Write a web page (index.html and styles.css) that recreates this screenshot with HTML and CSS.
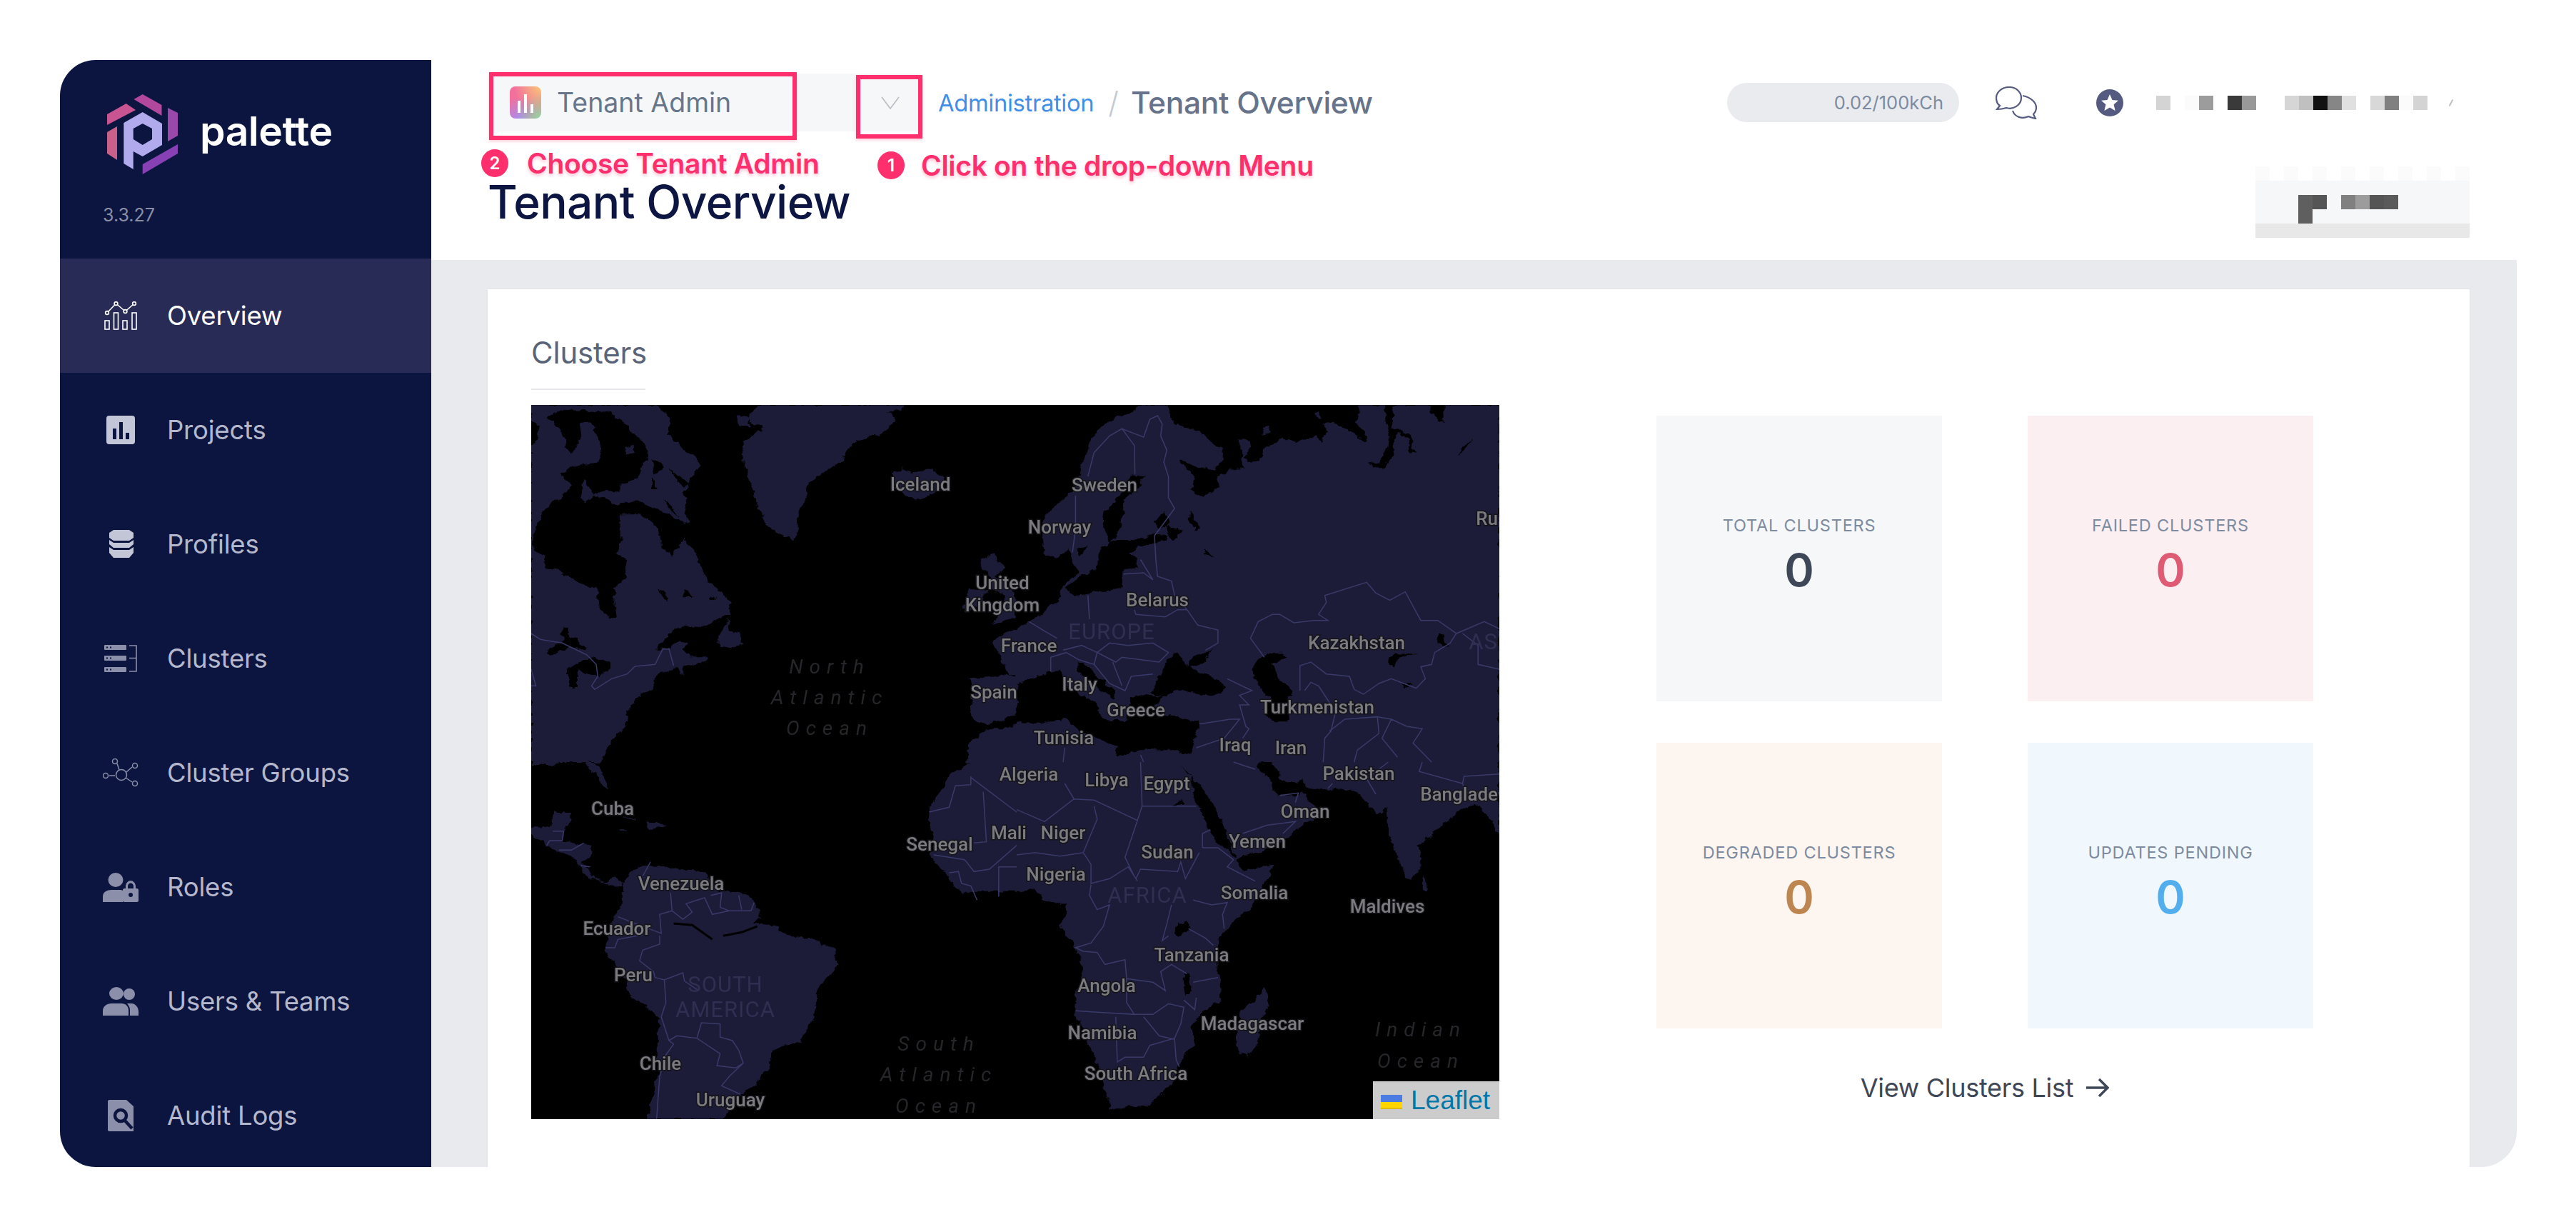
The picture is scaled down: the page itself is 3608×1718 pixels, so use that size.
FILE: index.html
```html
<!DOCTYPE html>
<html lang="en">
<head>
<meta charset="utf-8">
<title>Tenant Overview</title>
<link rel="stylesheet" href="styles.css">
</head>
<body>
<div class="window">
  <aside class="sidebar">
    <div class="brand">
      <div class="brand-row">
        <svg class="logo" viewBox="0 0 99 113" aria-hidden="true">
          <polygon fill="#b2489e" points="49.7,0 76.5,15 76.5,30 37.4,7"/>
          <polygon fill="#c85592" points="0,28 26.7,13 40,22 0,43"/>
          <polygon fill="#c9608a" points="0,53 14,45 14,92 0,83"/>
          <polygon fill="#9b48ab" points="85,19 99,26 99,58 85,66"/>
          <polygon fill="#8741b5" points="49.7,98 99,70 99,83 49.7,112"/>
          <path fill="#b1aaec" fill-rule="evenodd" d="M49.7 25 77 41V71L49.7 87 36.7 80V105L23.3 97V40ZM49.7 41 36.7 48V63L49.7 71 63 63V48Z"/>
        </svg>
        <span class="brand-name">palette</span>
      </div>
      <div class="version">3.3.27</div>
    </div>
    <nav class="nav">
      <a class="nav-item active">
        <span class="nav-icon">
          <svg width="46" height="40" viewBox="0 0 46 40" fill="none" stroke="#fff" stroke-width="1.6">
            <polyline points="4,16 16.5,3 29.5,14 42,3"/>
            <circle cx="4" cy="16" r="2.4" fill="#272b55"/><circle cx="16.5" cy="3" r="2.4" fill="#272b55"/>
            <circle cx="29.5" cy="14" r="2.4" fill="#272b55"/><circle cx="42" cy="3" r="2.4" fill="#272b55"/>
            <rect x="1" y="27" width="6" height="12"/><rect x="13.5" y="16" width="6" height="23"/>
            <rect x="26" y="27" width="6" height="12"/><rect x="39" y="16" width="6" height="23"/>
          </svg>
        </span>
        <span>Overview</span>
      </a>
      <a class="nav-item">
        <span class="nav-icon">
          <svg width="40" height="40" viewBox="0 0 40 40">
            <rect width="40" height="40" rx="4" fill="#c3c6d6"/>
            <rect x="9" y="18" width="5" height="15" fill="#0c1540"/><rect x="18" y="9" width="5" height="24" fill="#0c1540"/><rect x="27" y="24" width="5" height="9" fill="#0c1540"/>
          </svg>
        </span>
        <span>Projects</span>
      </a>
      <a class="nav-item">
        <span class="nav-icon">
          <svg width="34" height="40" viewBox="0 0 34 40" fill="#c3c6d6">
            <path d="M6 0H28L34 4V11L28 15H6L0 11V4Z"/>
            <path d="M0 14 6 18H28L34 14V20L28 25H6L0 20Z"/>
            <path d="M0 24 6 28H28L34 24V32L28 39H6L0 32Z"/>
          </svg>
        </span>
        <span>Profiles</span>
      </a>
      <a class="nav-item">
        <span class="nav-icon">
          <svg width="46" height="38" viewBox="0 0 46 38">
            <g fill="#8b8fa9">
              <rect y="0" width="31" height="7" rx="1"/><rect y="15" width="31" height="7" rx="1"/><rect y="31" width="31" height="7" rx="1"/>
            </g>
            <g fill="#0c1540">
              <rect x="3" y="2.5" width="2" height="2"/><rect x="8" y="2.5" width="2" height="2"/>
              <rect x="3" y="17.5" width="2" height="2"/><rect x="8" y="17.5" width="2" height="2"/>
              <rect x="3" y="33.5" width="2" height="2"/><rect x="8" y="33.5" width="2" height="2"/>
            </g>
            <path d="M35 1H45V37H35M35 18.500H45" fill="none" stroke="#8b8fa9" stroke-width="1.600"/>
          </svg>
        </span>
        <span>Clusters</span>
      </a>
      <a class="nav-item">
        <span class="nav-icon">
          <svg width="50" height="40" viewBox="0 0 50 40" fill="none" stroke="#8b8fa9" stroke-width="1.500">
            <circle cx="26" cy="23" r="7.500"/><circle cx="17" cy="4" r="3.500"/><circle cx="45" cy="10" r="3.500"/><circle cx="45" cy="35" r="3.500"/><circle cx="4" cy="24" r="3.500"/>
            <path d="M20 7 23 16M41 12 33 19M41 33 32 27M9 24H17"/>
          </svg>
        </span>
        <span>Cluster Groups</span>
      </a>
      <a class="nav-item">
        <span class="nav-icon">
          <svg width="50" height="41" viewBox="0 0 50 41" fill="#8b8fa9">
            <ellipse cx="18" cy="10" rx="10.500" ry="10"/>
            <path d="M0 41V33C0 27 6 24 12 24H24C25 24 27 24 28 25V41Z"/>
            <path d="M32 22V19C32 14 36 11 39 11S46 14 46 19V22H43V19C43 16 41 14.500 39 14.500S35 16 35 19V22Z"/>
            <path d="M30 22H48C49 22 50 23 50 24V39C50 40 49 41 48 41H30C29 41 28 40 28 39V24C28 23 29 22 30 22Z"/>
            <circle cx="39" cy="31" r="3" fill="#0c1540"/>
          </svg>
        </span>
        <span>Roles</span>
      </a>
      <a class="nav-item">
        <span class="nav-icon">
          <svg width="50" height="40" viewBox="0 0 50 40" fill="#8b8fa9">
            <ellipse cx="19" cy="9" rx="10" ry="9"/><ellipse cx="37" cy="10" rx="8" ry="8"/>
            <path d="M0 40V33C0 27 6 23 12 23H26C32 23 36 27 36 33V40Z"/>
            <path d="M38 40V32C38 28 36 26 34 23H40C46 23 50 29 50 34V40Z"/>
          </svg>
        </span>
        <span>Users &amp; Teams</span>
      </a>
      <a class="nav-item">
        <span class="nav-icon">
          <svg width="36" height="44" viewBox="0 0 36 44">
            <path fill="#8b8fa9" d="M2 0H26L36 9V44H2C1 44 0 43 0 42V2C0 1 1 0 2 0Z"/>
            <circle cx="18" cy="22" r="8" fill="none" stroke="#0c1540" stroke-width="4.500"/>
            <path d="M23 28 34 40" stroke="#0c1540" stroke-width="4.500"/>
          </svg>
        </span>
        <span>Audit Logs</span>
      </a>
    </nav>
  </aside>

  <main class="main">
    <header class="header">
      <div class="topbar">
        <div class="select">
          <span class="select-icon">
            <svg width="44" height="45" viewBox="0 0 44 45">
              <rect x="11" y="20" width="4" height="17" fill="#fff"/><rect x="20" y="11" width="4" height="26" fill="#fff"/><rect x="29" y="25" width="4" height="12" fill="#fff"/>
            </svg>
          </span>
          <span class="select-label">Tenant Admin</span>
          <span class="select-chevron">
            <svg width="26" height="18" viewBox="0 0 26 18" fill="none" stroke="#b9bcc2" stroke-width="1.600"><polyline points="1,1 13,17 25,1"/></svg>
          </span>
        </div>
        <div class="crumbs">
          <a class="crumb-link">Administration</a>
          <span class="crumb-sep">/</span>
          <span class="crumb-current">Tenant Overview</span>
        </div>
        <div class="top-right">
          <div class="credits">0.02/100kCh</div>
          <svg class="chat" width="58" height="46" viewBox="0 0 58 46" fill="none" stroke="#555b80" stroke-width="2.200">
            <path d="M19 1C9 1 1 8 1 16C1 21 3 25 6 27L2 32C8 32 12 31 15 30C25 33 36 26 36 16C36 8 29 1 19 1Z"/>
            <path d="M38 13C49 15 57 22 57 30C57 34 55 37 53 39L56 45C51 44 48 43 46 42C37 46 27 43 24 34"/>
          </svg>
          <svg class="star" width="38" height="38" viewBox="0 0 38 38">
            <circle cx="19" cy="19" r="19" fill="#555b80"/>
            <polygon fill="#fff" points="19,7 22.500,15 31,15.700 24.600,21.300 26.600,30 19,25.400 11.400,30 13.400,21.300 7,15.700 15.500,15"/>
          </svg>
          <div class="pix-user"></div>
          <span class="pix-tick"></span>
        </div>
      </div>
      <div class="titlebar">
        <h1 class="page-title">Tenant Overview</h1>
        <div class="pix-action">
          <div class="pix-r1"></div><div class="pix-r2"></div><div class="pix-r3"></div><div class="pix-r4"></div><div class="pix-r5"></div>
        </div>
      </div>

      <span class="mark mark-select"></span>
      <span class="mark mark-chevron"></span>
      <div class="note note-two"><span class="note-dot">2</span><span>Choose Tenant Admin</span></div>
      <div class="note note-one"><span class="note-dot">1</span><span>Click on the drop-down Menu</span></div>
    </header>

    <section class="content">
      <div class="card">
        <div class="map-col">
          <h2 class="card-title">Clusters</h2>
          <div class="map">
            <svg class="map-svg" viewBox="0 0 1356 1000" preserveAspectRatio="none">
              <defs>
                <filter id="coast" filterUnits="userSpaceOnUse" x="0" y="0" width="3127" height="3000">
                  <feTurbulence type="fractalNoise" baseFrequency="0.035 0.03" numOctaves="3" seed="4" result="n"/>
                  <feDisplacementMap in="SourceGraphic" in2="n" scale="26" xChannelSelector="R" yChannelSelector="G"/>
                </filter>
              </defs>
              <g transform="scale(0.43367 0.33333)">
                <g class="coast">
                <g class="land">
                  <!-- north-west quadrant -->
                  <polygon points="0,0 400,0 440,40 450,90 440,120 480,170 520,215 550,250 520,290 510,330 490,370 500,420 505,500 500,560 530,630 550,690 570,740 610,780 645,830 640,880 600,900 560,930 470,935 430,980 405,1030 440,1025 480,990 510,1000 490,1020 510,1060 570,1060 570,1075 490,1100 485,1135 470,1100 400,1140 395,1190 345,1220 310,1290 305,1350 260,1410 225,1500 0,1500"/>
                  <polygon points="725,0 1100,0 1170,40 1180,70 1130,120 1040,160 1020,190 1000,240 950,280 900,320 885,400 865,450 860,530 845,570 800,540 760,500 740,440 720,380 700,300 685,250 680,200 690,150 745,100 700,60"/>
                  <polygon points="1100,0 1205,0 1195,25 1120,30"/>
                  <polygon points="665,40 700,50 705,90 675,85"/>
                  <polygon points="1170,290 1195,265 1230,285 1295,265 1325,300 1320,350 1280,380 1240,405 1200,370 1165,340"/>
                  <polygon points="635,895 610,960 600,1010 650,1015 685,1005 670,960 640,950"/>
                  <polygon points="1450,650 1490,628 1528,680 1505,715 1535,770 1568,800 1568,890 1490,920 1530,860 1530,800 1470,760 1490,720 1455,690"/>
                  <polygon points="1420,770 1470,780 1450,830 1400,880 1400,840"/>
                  <polygon points="1490,990 1530,960 1568,945 1568,1135 1545,1135 1510,1050"/>
                  <polygon points="1415,1150 1510,1140 1530,1130 1568,1145 1568,1290 1520,1320 1470,1345 1420,1310 1415,1270 1430,1210"/>
                  <polygon points="1470,1360 1520,1360 1568,1340 1568,1500 1405,1500 1420,1420"/>
                  <!-- south-west quadrant -->
                  <g transform="translate(0 1500)">
                    <polygon points="0,0 90,0 60,15 0,15"/>
                    <polygon points="175,0 210,5 245,80 240,115 215,70"/>
                    <polygon points="0,280 60,270 75,210 135,210 110,280 105,335 195,350 190,400 160,420 190,450 205,490 240,505 270,480 295,510 290,520 240,510 205,495 170,470 155,430 130,390 60,360 40,330 0,320"/>
                    <polygon points="370,248 410,250 435,270 385,283"/>
                    <polygon points="295,232 340,236 340,240 295,238"/>
                    <polygon points="285,280 305,280 305,285 285,285"/>
                    <polygon points="295,520 325,450 365,435 395,440 440,440 510,455 555,460 570,480 610,545 680,550 720,580 740,650 720,680 790,690 830,730 900,740 985,795 988,860 925,950 920,1040 905,1100 870,1170 780,1210 765,1290 720,1360 660,1420 620,1500 375,1500 410,1300 410,1070 320,980 300,900 235,790 240,760 270,650 295,600"/>
                    <polygon points="1568,0 1420,0 1350,60 1290,190 1280,220 1300,310 1290,400 1340,470 1380,540 1440,580 1510,565 1568,565"/>
                  </g>
                  <!-- eastern half, land first then seas cut in black -->
                  <rect x="1568" y="0" width="1559" height="3000"/>
                </g>
                <g class="water">
                  <path d="M5,600 15,510 45,440 75,405 110,375 135,320 160,280 175,300 160,340 170,410 200,380 240,400 280,420 340,400 380,420 470,480 510,500 495,570 455,635 420,600 415,520 350,460 285,460 290,560 280,620 305,660 305,720 265,780 275,880 250,900 215,840 210,770 160,750 80,690 45,685 40,630Z"/>
                  <path d="M50,50 100,20 260,30 310,90 370,170 380,220 350,270 345,310 285,335 285,365 240,360 200,375 165,300 130,330 90,290 150,255 215,245 225,200 215,130 190,70 155,75 160,130 130,210 110,160 90,100Z"/>
                  <path d="M0,80 25,90 15,150 0,170Z"/>
                  <path d="M390,225 430,260 400,290Z"/><path d="M445,265 510,330 490,345Z"/><path d="M385,310 410,350 385,355Z"/><path d="M430,395 480,470 440,430Z"/>
                  <path d="M300,175 330,165 330,205 305,212Z" class="land-fill"/>
                  <path d="M100,935 120,935 120,975 150,985 175,1030 130,1020 60,1050 45,1040 100,990Z"/>
                  <path d="M120,1100 165,1080 190,1060 250,1080 255,1105 215,1140 185,1130 150,1110 150,1190 130,1200 115,1130Z"/>
                  <path d="M410,770 440,790 445,830 410,790Z"/><path d="M500,770 525,810 485,810Z"/><path d="M580,800 600,810 575,825Z"/>
                  <g transform="translate(1568 0)">
                    <path d="M-5,-5 410,-5 362,40 314,60 290,80 240,140 215,240 190,350 130,420 80,480 85,560 90,630 130,640 165,600 180,640 200,700 150,760 140,810 100,860 40,910 -5,950Z"/>
                    <path d="M165,610 195,690 205,715 260,690 265,620 300,570 275,500 280,450 330,385 360,320 365,295 410,300 400,340 345,400 340,500 310,570 370,570 440,545 490,550 480,570 400,590 370,620 395,685 345,690 340,770 250,790 190,800 160,770 205,715Z"/>
                    <path d="M491,-5 1108,-5 1095,70 1132,130 1120,150 1039,80 991,75 1003,110 979,155 967,125 894,160 862,135 797,190 781,235 749,240 733,215 757,180 753,150 721,145 725,210 733,270 692,265 648,300 652,350 604,390 564,360 572,300 527,230 588,260 636,275 668,240 668,200 596,115 503,75 495,25Z"/>
                    <path d="M1192,-5 1220,-5 1212,100 1240,100 1273,130 1281,185 1293,200 1269,195 1265,140 1232,115 1216,160 1220,200 1188,265 1152,265 1132,240 1168,245 1200,180 1204,130 1188,60Z"/>
                    <path d="M1341,-5 1378,-5 1378,75 1362,60 1341,30Z"/><path d="M1434,180 1470,140 1445,190 1434,210Z"/>
                    <path d="M440,490 480,450 490,500 460,520Z"/><path d="M560,440 590,510 575,530 555,480Z"/><path d="M485,500 530,530 510,570 490,540Z"/><path d="M605,605 635,640 610,630Z"/><path d="M200,600 225,590 215,630 200,635Z"/>
                    <path d="M445,1180 480,1100 490,1060 520,1045 545,1080 550,1100 570,1060 630,1030 600,1090 560,1100 640,1150 680,1180 660,1215 600,1215 520,1195 470,1225 440,1210Z"/>
                    <path d="M760,1110 775,1075 815,1040 860,1040 870,1060 830,1090 845,1150 890,1200 880,1230 880,1330 830,1330 800,1300 820,1240 780,1170Z"/>
                    <path d="M0,1170 40,1150 140,1115 165,1180 220,1230 260,1245 265,1295 290,1320 350,1330 370,1230 420,1215 470,1225 445,1265 470,1300 590,1330 560,1470 500,1450 400,1450 320,1480 320,1430 200,1370 160,1320 60,1340 0,1330Z"/>
                    <path d="M195,1080 215,1080 250,1130 320,1200 315,1240 260,1190 205,1130Z"/>
                    <path d="M1200,1060 1225,1045 1295,1045 1240,1060 1210,1100Z"/><path d="M1360,960 1380,965 1390,1015 1355,1000Z"/><path d="M1240,1170 1280,1170 1260,1185Z"/>
                    <polygon class="land-fill" points="958,30 975,30 987,62 970,60"/>
                    <polygon class="land-fill" points="793,95 815,90 821,115 795,125"/>
                  </g>
                  <g transform="translate(1568 1500)">
                    <path d="M-170,545 0,545 60,535 85,575 155,600 160,630 140,690 190,770 215,870 190,1000 190,1060 240,1200 280,1340 300,1460 350,1450 430,1440 500,1350 530,1250 575,1180 560,1110 600,1050 660,1000 655,900 640,830 650,740 770,590 830,430 730,455 705,410 830,355 900,290 945,250 975,220 945,170 920,120 910,140 840,140 825,100 780,20 790,0 830,0 850,70 910,90 920,70 940,110 1010,120 1080,110 1120,150 1165,220 1190,190 1200,300 1260,490 1275,490 1305,450 1300,350 1390,250 1430,200 1500,180 1565,320 1565,1505 -100,1505Z"/>
                    <path d="M530,10 550,50 590,90 640,190 680,300 705,395 700,405 685,370 640,330 605,230 575,160 560,60Z"/>
                    <path d="M505,190 530,150 540,180Z"/>
                    <path d="M515,675 550,670 555,710 525,735 510,720Z"/><path d="M545,890 560,900 565,960 545,980 540,950Z"/>
                  </g>
                </g>
                <g class="land">
                  <g transform="translate(1568 1500)">
                    <polygon points="1305,475 1330,510 1330,540 1310,540"/>
                    <polygon points="800,940 815,1010 790,1090 775,1190 745,1235 715,1220 705,1160 725,1040 770,1000"/>
                  </g>
                </g>
                </g>
                <g class="lines">
                  <path d="M0,960 30,985 100,1000 180,1050 210,1090 215,1140 195,1180 205,1195 260,1150 310,1130 335,1098 400,1090 425,1025 445,1025 460,1095"/>
                  <path d="M0,1110 15,1180 0,1180"/>
                  <g transform="translate(0 1500)">
                    <path d="M1420,65 1568,210M1460,125 1470,335 1430,340M1420,60 1420,95 1370,100 1350,190 1285,210M1300,390 1400,410 1430,460 1480,450 1568,350M1350,465 1380,460 1390,510 1420,520 1440,580M1510,565 1510,440 1568,440"/>
                    <path d="M385,420 360,480M450,550 455,625 490,660 520,630 500,595 560,570 585,640 640,625 710,625 720,590M580,560 615,550 610,610 640,625M670,560 680,620M455,625 415,640 420,720 280,650M415,730 415,765 360,790 350,835 395,880 400,905 430,915 490,885 495,920 540,960M430,915 435,1010 420,1070 445,1170 460,1185 435,1230 415,1320 405,1500M445,1170 470,1150 535,1160 550,1095 610,1100 610,1155 650,1170 670,1210 685,1265 640,1320 615,1360 675,1395M535,1160 610,1225 600,1275 660,1285 685,1265M240,780 270,780 280,745 360,725"/>
                    <path d="M70,290 105,290 100,330 60,330 50,350M90,370 130,370 170,340M160,435 190,440"/>
                  </g>
                  <g transform="translate(1568 0)">
                    <path d="M230,300 250,200 300,130 340,100 380,170 382,290M190,380 190,520 180,620"/>
                    <path d="M340,100 410,135 430,60 455,45 470,80 465,130 485,190 475,240 490,300 490,390 510,435 445,550 450,660 455,720 500,740 510,800 550,860 585,925 650,945 650,1000 610,1030"/>
                    <path d="M345,710 410,705 440,735 400,650M380,860 385,880 480,890 520,860 550,860"/>
                    <path d="M800,1060 755,980 780,910 825,880 850,880 895,915 960,905 1005,905 975,880 1000,830 995,800 1130,745 1160,790 1205,820 1255,785 1305,905 1360,905 1420,960 1400,1000 1350,1040 1340,1090 1305,1100 1320,1150 1290,1190 1210,1150 1170,1170 1120,1215 1090,1195 1075,1140 1000,1130 950,1080 915,1095 915,1200"/>
                    <path d="M930,1200 950,1165 975,1180 1030,1290 1015,1370 995,1400 990,1500M1010,1370 1060,1320 1165,1310 1170,1380 1100,1450 1090,1500"/>
                    <path d="M1420,960 1510,910 1559,940M1440,960 1490,1010 1490,1090 1559,1110"/>
                    <path d="M230,800 235,900M40,910 90,950 130,980M150,1030 210,1010 260,1040 300,1000 360,1010 440,1000 490,1040 460,1080 340,1060 320,1080 260,1040 250,1090 300,1170 350,1200 370,1140 440,1130M310,1080 340,1180M110,1060 160,1040 200,1070 250,1090M110,1060 110,1120"/>
                    <path d="M680,1150 760,1200 720,1220 750,1260 720,1260 740,1350 750,1360 730,1400M590,1340 690,1320 720,1320 670,1400 580,1440"/>
                    <path d="M1165,1310 1210,1320 1260,1350 1310,1360 1280,1420 1340,1500M1210,1320 1180,1400 1230,1480M155,1440 150,1500M400,1470 410,1500"/>
                  </g>
                  <g transform="translate(1568 1500)">
                    <path d="M155,90 185,155 90,250 0,200M185,155 250,160 390,245 405,185 400,0M405,185 580,185M250,185 260,240 215,380 240,430 240,510 300,490 360,440 385,490 400,450 520,460 530,420 545,490 590,380M390,245 350,400 380,480 390,500M600,360 600,300 625,285M600,360 650,360 700,410 680,440 770,500M0,390 60,380 140,395 215,380"/>
                    <path d="M240,515 235,560 260,620 300,600 280,690 240,760 190,780 215,795 260,800 285,850 350,830 355,910 440,925 480,960 465,880 500,850 550,890M570,580 630,600 680,590 665,640 670,700M555,700 610,740 635,770M500,600 485,680 470,750 490,730M355,910 355,1010 380,1060 190,1045"/>
                    <path d="M380,1060 440,1060 490,1015 540,1030 530,1100 510,1160 430,1190 410,1240 350,1240 325,1260 320,1070M410,1070 460,1150 510,1165 515,1250 525,1280M570,925 650,905M540,1000 575,1040 580,990"/>
                    <path d="M700,0 770,30M850,140 910,130 900,170M730,300 810,265 900,250 860,300M1020,90 1005,110M1160,135 1130,70 1200,0M1310,0 1300,40 1440,90 1445,60 1559,50M1440,90 1450,130 1559,130"/>
                  </g>
                </g>
                <g class="river">
                  <path d="M460,2178 520,2185 585,2245M620,2230 680,2215 730,2190"/>
                </g>
              </g>
              <g class="lbl">
                <text x="545" y="120">Iceland</text><text x="803" y="121">Sweden</text><text x="740" y="180">Norway</text>
                <text x="660" y="258">United</text><text x="660" y="289">Kingdom</text><text x="877" y="282">Belarus</text>
                <text x="697" y="346">France</text><text x="1156" y="342">Kazakhstan</text><text x="768" y="400">Italy</text>
                <text x="648" y="411">Spain</text><text x="1101" y="432">Turkmenistan</text><text x="847" y="436">Greece</text>
                <text x="746" y="475">Tunisia</text><text x="986" y="485">Iraq</text><text x="1064" y="489">Iran</text>
                <text x="697" y="526">Algeria</text><text x="806" y="534">Libya</text><text x="890" y="539">Egypt</text>
                <text x="1159" y="525">Pakistan</text><text class="at-edge" x="1354" y="554">Banglade</text><text x="114" y="574">Cuba</text>
                <text x="1084" y="578">Oman</text><text x="572" y="624">Senegal</text><text x="669" y="608">Mali</text>
                <text x="745" y="608">Niger</text><text x="1017" y="620">Yemen</text><text x="891" y="635">Sudan</text>
                <text x="735" y="666">Nigeria</text><text x="210" y="679">Venezuela</text><text x="1013" y="692">Somalia</text>
                <text x="1199" y="711">Maldives</text><text x="120" y="742">Ecuador</text><text x="925" y="779">Tanzania</text>
                <text x="806" y="822">Angola</text><text x="143" y="807">Peru</text><text x="1010" y="875">Madagascar</text>
                <text x="800" y="888">Namibia</text><text x="181" y="931">Chile</text><text x="847" y="945">South Africa</text>
                <text x="279" y="982">Uruguay</text><text class="at-edge" x="1354" y="168">Ru</text>
              </g>
              <g class="lbl-region">
                <text x="813" y="328">EUROPE</text><text x="863" y="697">AFRICA</text><text x="272" y="822">SOUTH</text>
                <text x="272" y="857">AMERICA</text><text class="at-edge" x="1354" y="342">AS</text>
              </g>
              <g class="lbl-ocean">
                <text x="418" y="376">North</text><text x="418" y="419">Atlantic</text><text x="418" y="462">Ocean</text>
                <text x="571" y="904">South</text><text x="571" y="947">Atlantic</text><text x="571" y="991">Ocean</text>
                <text x="1246" y="884">Indian</text><text x="1246" y="928">Ocean</text>
              </g>
            </svg>
            <div class="attribution">
              <svg width="30" height="20" viewBox="0 0 30 20"><rect width="30" height="10" fill="#4c7be1"/><rect y="10" width="30" height="8" fill="#ffd500"/><rect y="18" width="30" height="2" fill="#e0bc00"/></svg>
              <span>Leaflet</span>
            </div>
          </div>
        </div>
        <div class="stats-col">
          <div class="stats">
            <div class="tile tile-total"><div class="tile-label">TOTAL CLUSTERS</div><div class="tile-num">0</div></div>
            <div class="tile tile-failed"><div class="tile-label">FAILED CLUSTERS</div><div class="tile-num">0</div></div>
            <div class="tile tile-degraded"><div class="tile-label">DEGRADED CLUSTERS</div><div class="tile-num">0</div></div>
            <div class="tile tile-updates"><div class="tile-label">UPDATES PENDING</div><div class="tile-num">0</div></div>
          </div>
          <a class="view-link">
            <span>View Clusters List</span>
            <svg width="32" height="28" viewBox="0 0 32 28" fill="none" stroke="#3e4757" stroke-width="3.400"><path d="M0 14H30M18 2 30 14 18 26"/></svg>
          </a>
        </div>
      </div>
    </section>
  </main>
</div>
</body>
</html>
```

FILE: styles.css
```css
* { box-sizing: border-box; }
html, body { margin: 0; background: #fff; }
body { font-family: Inter, "Open Sans", sans-serif; }

.window {
  display: flex;
  width: 3441px;
  height: 1550px;
  margin: 84px 0 0 84px;
  border-radius: 50px;
  overflow: hidden;
}

/* sidebar */
.sidebar { flex: 0 0 520px; background: #0c1540; display: flex; flex-direction: column; }
.brand { flex: none; height: 278px; padding: 48px 0 0 60px; }
.brand-row { display: flex; align-items: center; gap: 31px; margin-left: 6px; }
.logo { width: 99px; height: 113px; }
.brand-name { color: #fff; font-size: 57px; font-weight: 600; letter-spacing: -0.5px; line-height: 1; margin-top: -10px; }
.version { color: #8a8ea6; font-size: 25px; margin-top: 41px; line-height: 30px; }
.nav { flex: none; display: flex; flex-direction: column; }
.nav-item {
  display: flex; align-items: center;
  height: 160px; padding-left: 60px;
  color: #b5b8cc; font-size: 36.500px; letter-spacing: -0.2px;
}
.nav-item.active { background: #272b55; color: #fff; }
.nav-icon { flex: 0 0 90px; display: flex; }
.nav-icon svg { display: block; margin-left: 2px; }
.nav-item:nth-child(2) .nav-icon svg { margin-left: 5px; }
.nav-item:nth-child(3) .nav-icon svg { margin-left: 9px; }
.nav-item:nth-child(5) .nav-icon svg,
.nav-item:nth-child(6) .nav-icon svg,
.nav-item:nth-child(7) .nav-icon svg { margin-left: 0; }
.nav-item:nth-child(8) .nav-icon svg { margin-left: 7px; }

/* main column */
.main { flex: 1; display: flex; flex-direction: column; min-width: 0; }
.header { position: relative; height: 280px; background: #fff; flex: none; padding: 19px 66px 0 81px; }
.topbar { display: flex; align-items: center; height: 81px; }
.select {
  flex: 0 0 605px; height: 81px; background: #f6f7f9;
  display: flex; align-items: center; padding-left: 29px;
}
.select-icon {
  width: 44px; height: 45px; border-radius: 8px; display: block;
  background:
    radial-gradient(circle at 100% 100%, #8ddda0 0, transparent 55%),
    radial-gradient(circle at 30% 100%, #a98bf0 0, transparent 55%),
    radial-gradient(circle at 100% 0, #f9c977 0, transparent 60%),
    linear-gradient(#f2709c, #f2709c);
}
.select-icon svg { display: block; }
.select-label { margin-left: 22px; color: #687689; font-size: 37.500px; }
.select-chevron { margin-left: auto; margin-right: 30px; display: flex; }
.crumbs { display: flex; align-items: center; margin-left: 24px; }
.crumb-link { color: #3f8fe8; font-size: 32.700px; letter-spacing: -0.3px; }
.crumb-sep { color: #c5c9d0; font-size: 42px; font-weight: 300; margin: 0 17px 0 20px; }
.crumb-current { color: #66738a; font-size: 42.500px; font-weight: 500; letter-spacing: -0.3px; }
.top-right { margin-left: auto; display: flex; align-items: center; position: relative; width: 1040px; }
.credits {
  width: 325px; height: 55px; border-radius: 28px; background: #e9ebef;
  color: #7d8ba1; font-size: 25.500px; line-height: 55px; text-align: right; padding-right: 22px;
}
.chat { margin-left: 51px; }
.star { margin-left: 83px; }
.pix-user {
  width: 380px; height: 20px; margin-left: 46px;
  background: linear-gradient(90deg,#d4d4d4 0 20px,#fff 20px 40px,#fbfbfb 40px 60px,#9c9c9c 60px 80px,#fff 80px 100px,#3a3a3a 100px 120px,#999 120px 140px,#fff 140px 180px,#d6d6d6 180px 200px,#c0c0c0 200px 220px,#111 220px 240px,#868686 240px 260px,#e0e0e0 260px 280px,#fff 280px 300px,#d8d8d8 300px 320px,#808080 320px 340px,#fbfbfb 340px 360px,#d4d4d4 360px 380px);
}
.pix-tick { position: absolute; right: 25px; width: 2px; height: 10px; background: #c0c0c0; transform: rotate(28deg); }
.titlebar { display: flex; align-items: center; justify-content: space-between; margin-top: 49px; height: 100px; }
.page-title { margin: 0 0 0 -2px; color: #0d1642; font-size: 64px; line-height: 64px; font-weight: 500; letter-spacing: -0.6px; }
.pix-action { width: 300px; }
.pix-action div { height: 20px; }
.pix-r1 { background: repeating-linear-gradient(90deg,#fbfbfb 0 20px,#fff 20px 40px); }
.pix-r2 { background: #f6f7f9; }
.pix-r3 { background: linear-gradient(90deg,#f6f7f9 0 60px,#5f5f5f 60px 80px,#555 80px 100px,#f6f7f9 100px 120px,#808080 120px 140px,#9c9c9c 140px 160px,#555 160px 180px,#5a5a5a 180px 200px,#f6f7f9 200px); }
.pix-r4 { background: linear-gradient(90deg,#f6f7f9 0 60px,#5f5f5f 60px 80px,#f6f7f9 80px); }
.pix-r5 { background: #e8e8e8; }

/* tutorial annotations, laid over the header */
.mark { position: absolute; border: 6px solid #ff2e6c; box-shadow: 0 2px 4px rgba(255,46,108,.25); }
.mark-select { left: 81px; top: 17px; width: 431px; height: 95px; }
.mark-chevron { left: 595px; top: 21px; width: 93px; height: 89px; }
.note {
  position: absolute; display: flex; align-items: center;
  color: #ff2e6c; font-size: 39px; line-height: 39px; font-weight: 600; letter-spacing: -0.3px;
  text-shadow: 0 3px 4px rgba(255,46,108,.28);
}
.note-dot {
  flex: none; width: 38px; height: 39px; border-radius: 50%; background: #ff2e6c; color: #fff;
  font-size: 24px; font-weight: 600; text-align: center; line-height: 39px; text-shadow: none; letter-spacing: 0;
}
.note-two { left: 70px; top: 125px; gap: 26px; }
.note-one { left: 625px; top: 128px; gap: 23px; }

/* content */
.content { flex: 1; min-height: 0; background: #e8eaee; padding: 41px 66px 0 79px; overflow: hidden; }
.card { background: #fff; height: 100%; display: flex; padding-left: 61px; box-shadow: 0 0 2px rgba(0,0,0,.08); }
.map-col { flex: 0 0 1356px; }
.card-title {
  margin: 0; width: 160px; height: 141px; padding-top: 65px;
  border-bottom: 2px solid #e5e7eb;
  color: #5a6478; font-size: 42px; font-weight: 400; line-height: 48px; letter-spacing: -0.2px; white-space: nowrap;
}
.map { position: relative; width: 1356px; height: 1000px; margin-top: 21px; background: #000; overflow: hidden; }
.map-svg { display: block; width: 1356px; height: 1000px; }
.coast { filter: url(#coast); }
.land polygon, .land rect, .land-fill { fill: #1c1c38; }
.water { fill: #000; }
.water .land-fill { fill: #1c1c38; }
.lines path { fill: none; stroke: #3a3a6a; stroke-width: 1.5px; vector-effect: non-scaling-stroke; }
.river path { fill: none; stroke: #000; stroke-width: 3px; vector-effect: non-scaling-stroke; }
.map text { text-anchor: middle; font-family: Roboto, "Liberation Sans", sans-serif; }
.map text.at-edge { text-anchor: end; }
.lbl { filter: blur(0.5px); }
.lbl text {
  font-size: 26px; font-weight: 500; fill: #7b7b80;
  stroke: #141418; stroke-width: 3px; paint-order: stroke;
}
.lbl-region { filter: blur(0.5px); }
.lbl-region text { font-size: 31px; fill: #2f2f52; letter-spacing: 1px; }
.lbl-ocean { filter: blur(0.5px); }
.lbl-ocean text { font-size: 28px; font-style: italic; fill: #26262a; letter-spacing: 9px; }
.attribution {
  position: absolute; right: 0; bottom: 0; width: 177px; height: 53px;
  background: #ccc; display: flex; align-items: center; gap: 12px; padding-left: 11px;
  color: #0078a8; font-family: "Liberation Sans", Arial, sans-serif; font-size: 37px; line-height: 1;
}
.attribution svg { flex: none; margin-top: 4px; }

.stats-col { margin-left: 220px; padding-top: 177px; width: 920px; }
.stats { display: grid; grid-template-columns: 400px 400px; grid-auto-rows: 400px; column-gap: 120px; row-gap: 58px; }
.tile { text-align: center; padding-top: 136px; }
.tile-label { color: #7d8ba1; font-size: 23.500px; line-height: 36px; letter-spacing: 0.8px; }
.tile-num { font-size: 63px; font-weight: 600; line-height: 72px; margin-top: 8px; }
.tile-total { background: #f6f7f9; } .tile-total .tile-num { color: #3e4757; }
.tile-failed { background: #fbeff1; } .tile-failed .tile-num { color: #df5a73; }
.tile-degraded { background: #fdf5f0; } .tile-degraded .tile-num { color: #bd854f; }
.tile-updates { background: #f0f8fe; } .tile-updates .tile-num { color: #53aeee; }
.view-link {
  display: flex; align-items: center; justify-content: center; gap: 18px;
  margin-top: 59px; height: 48px; color: #3e4757; font-size: 36px; letter-spacing: -0.3px;
}
```
